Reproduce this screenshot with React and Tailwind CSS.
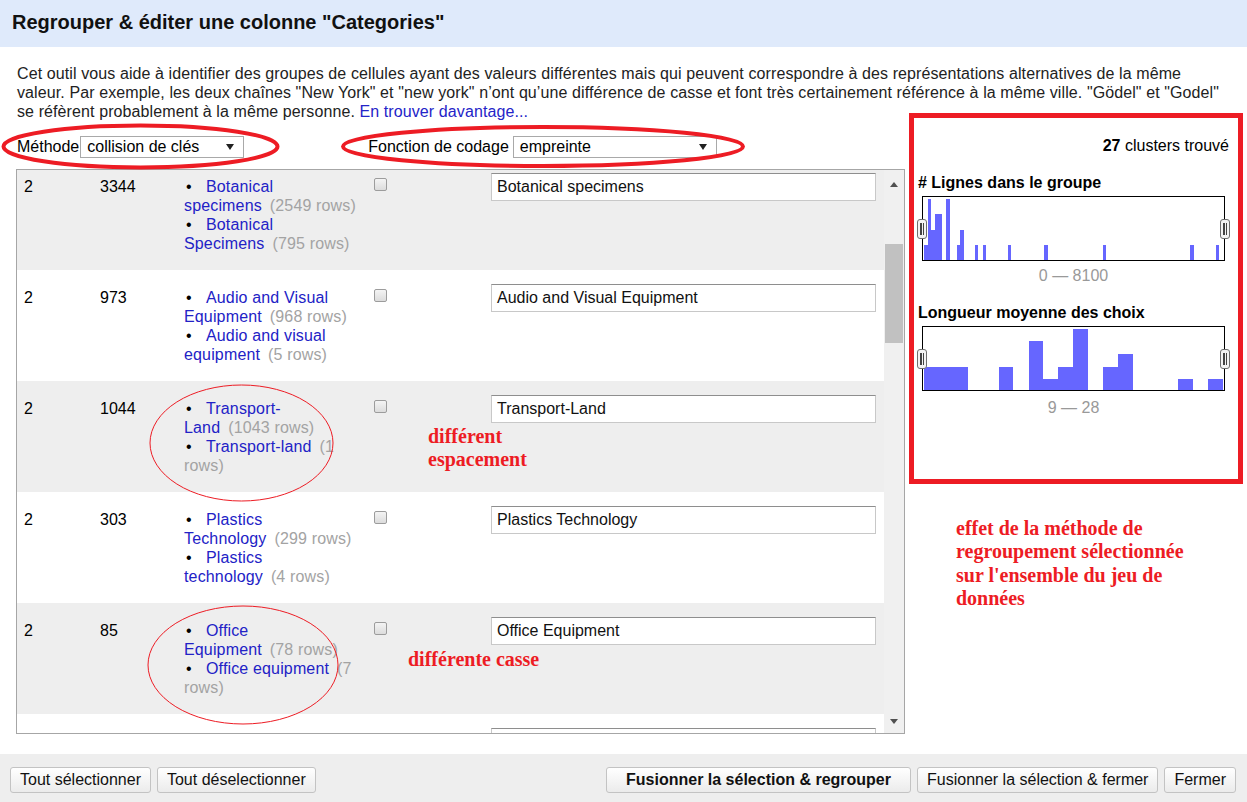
import React from 'react';

const rows = [
  { a: '2', b: '3344', items: [['Botanical|', 'specimens|(2549 rows)'], ['Botanical|', 'Specimens|(795 rows)']], v: 'Botanical specimens' },
  { a: '2', b: '973', items: [['Audio and Visual|', 'Equipment|(968 rows)'], ['Audio and visual|', 'equipment|(5 rows)']], v: 'Audio and Visual Equipment' },
  { a: '2', b: '1044', items: [['Transport-|', 'Land|(1043 rows)'], ['Transport-land|(1', '|rows)']], v: 'Transport-Land' },
  { a: '2', b: '303', items: [['Plastics|', 'Technology|(299 rows)'], ['Plastics|', 'technology|(4 rows)']], v: 'Plastics Technology' },
  { a: '2', b: '85', items: [['Office|', 'Equipment|(78 rows)'], ['Office equipment|(7', '|rows)']], v: 'Office Equipment' },
  { a: '', b: '', items: [], v: '' },
];

const bars1 = [[924, 928, 15], [928, 931, 61], [931, 935, 30], [935, 942, 46], [946, 950, 61], [957, 960, 15], [960, 964, 30], [975, 978, 15], [983, 986, 15], [1008, 1011, 15], [1044, 1048, 15], [1103, 1106, 15], [1190, 1194, 15], [1216, 1219, 15]];
const bars2 = [[924, 968, 23], [999, 1013, 23], [1029, 1043, 49], [1043, 1058, 11], [1058, 1073, 23], [1073, 1088, 61], [1103, 1118, 23], [1118, 1133, 36], [1178, 1193, 11], [1208, 1223, 11]];

function Select({ value, width }) {
  return (
    <div className={`${width} h-[22px] border border-[#a9a9a9] bg-white flex items-center justify-between pl-[6px] pr-[9px] leading-[20px]`}>
      <span>{value}</span>
      <span className="w-0 h-0 border-x-[4px] border-x-transparent border-t-[6px] border-t-[#222]" />
    </div>
  );
}

function Handle({ side }) {
  return (
    <div className={`absolute top-[23px] ${side} w-[10px] h-[20px] rounded-[3px] border-[1.5px] border-[#6f6f6f] bg-[#f4f4f4] flex items-center justify-center gap-[1px]`}>
      <span className="w-[1.5px] h-[12px] bg-[#444]" />
      <span className="w-[1.5px] h-[12px] bg-[#444]" />
    </div>
  );
}

function Chart({ bars }) {
  return (
    <div className="relative ml-[4px] w-[303px] h-[65px]">
      <div className="w-full h-full border border-black">
        <svg width="301" height="63" viewBox="0 0 301 63">
          {bars.map(([x1, x2, h], i) => (
            <rect key={i} x={x1 - 923} y={63 - h} width={x2 - x1} height={h} fill="#6666ff" />
          ))}
        </svg>
      </div>
      <Handle side="left-[-5px]" />
      <Handle side="right-[-5px]" />
    </div>
  );
}

function Row({ r, i }) {
  return (
    <div className={`flex items-start h-[111px] shrink-0 ${i % 2 === 0 ? 'bg-[#eeeeee]' : 'bg-white'} ${i === 0 ? 'mt-[-11px]' : ''}`}>
      <div className="w-[83px] pl-[7px] pt-[18px] leading-[19px]">{r.a}</div>
      <div className="w-[84px] pt-[18px] leading-[19px]">{r.b}</div>
      <div className="w-[190px] pt-[18px] leading-[19px] tracking-[0.15px]">
        {r.items.map((lines, k) => (
          <div key={k}>
            {lines.map((line, j) => {
              const [link, gray] = line.split('|');
              return (
                <div key={j} className="whitespace-nowrap">
                  {j === 0 && <span className="inline-block w-[22px] pl-[2px]">•</span>}
                  {link && <span className="text-[#2222c6]">{link}</span>}
                  {gray && <span className={`text-[#a3a3a3] ${link ? 'ml-[8px]' : ''}`}>{gray}</span>}
                </div>
              );
            })}
          </div>
        ))}
      </div>
      <div className="w-[117px] pt-[19px]">
        <div className="w-[13px] h-[13px] rounded-[2px] border border-[#9c9c9c] bg-linear-to-b from-[#f4f4f4] to-[#dcdcdc]" />
      </div>
      <div className="w-[385px] pt-[14px]">
        <div className="h-[28px] border border-[#c8c8c8] border-t-[#8e8e8e] bg-white pl-[5px] leading-[26px] text-[#111]">{r.v}</div>
      </div>
    </div>
  );
}

function Btn({ children, bold }) {
  return (
    <button className={`h-[26px] rounded-[3px] border border-[#c3c3c3] bg-linear-to-b from-white to-[#ebebeb] leading-[24px] text-[#111] ${bold ? 'font-bold px-[19px]' : 'px-[9px]'}`}>
      {children}
    </button>
  );
}

export default function App() {
  return (
    <div className="relative w-[1247px] h-[802px] bg-white text-[16px] text-black font-['Liberation_Sans',Arial,sans-serif] flex flex-col overflow-hidden">
      {/* Header */}
      <div className="h-[47px] shrink-0 bg-[#dfeafb] pl-[12px] pt-[11px] text-[20px] leading-[23px] font-bold text-[#111]">
        Regrouper &amp; éditer une colonne "Categories"
      </div>

      {/* Description */}
      <div className="h-[77px] shrink-0 pl-[17px] pt-[17px] leading-[19px] text-[#222] whitespace-nowrap tracking-[0.1px]">
        Cet outil vous aide à identifier des groupes de cellules ayant des valeurs différentes mais qui peuvent correspondre à des représentations alternatives de la même<br />
        valeur. Par exemple, les deux chaînes "New York" et "new york" n’ont qu’une différence de casse et font très certainement référence à la même ville. "Gödel" et "Godel"<br />
        se réfèrent probablement à la même personne. <span className="text-[#2424c8]">En trouver davantage...</span>
      </div>

      {/* Main */}
      <div className="flex h-[610px] shrink-0">
        <div className="w-[889px] ml-[16px] flex flex-col">
          <div className="h-[45px] flex items-center pl-[1px]">
            <span className="mr-[1px]">Méthode</span>
            <Select value="collision de clés" width="w-[164px]" />
            <span className="ml-[124px] mr-[4px]">Fonction de codage</span>
            <Select value="empreinte" width="w-[204px]" />
          </div>
          <div className="h-[565px] border border-[#a6a6a6] flex">
            <div className="flex-1 overflow-hidden flex flex-col">
              {rows.map((r, i) => <Row key={i} r={r} i={i} />)}
            </div>
            <div className="w-[20px] bg-[#f0f0f0] flex flex-col">
              <div className="h-[28px] flex items-center justify-center">
                <span className="w-0 h-0 border-x-[4px] border-x-transparent border-b-[5px] border-b-[#505050]" />
              </div>
              <div className="h-[46px]" />
              <div className="h-[99px] mx-[1px] bg-[#c1c1c1]" />
              <div className="flex-1" />
              <div className="h-[24px] flex items-center justify-center">
                <span className="w-0 h-0 border-x-[4px] border-x-transparent border-t-[5px] border-t-[#505050]" />
              </div>
            </div>
          </div>
        </div>

        <div className="flex-1 pl-[13px] pr-[18px] pt-[12px] leading-[19px]">
          <div className="text-right"><b>27</b> clusters trouvé</div>
          <div className="mt-[18px] font-bold">#&nbsp;Lignes dans le groupe</div>
          <div className="mt-[4px]"><Chart bars={bars1} /></div>
          <div className="mt-[5px] ml-[4px] w-[303px] text-center text-[#999]">0 — 8100</div>
          <div className="mt-[18px] font-bold">Longueur moyenne des choix</div>
          <div className="mt-[4px]"><Chart bars={bars2} /></div>
          <div className="mt-[7px] ml-[4px] w-[303px] text-center text-[#999]">9 — 28</div>
        </div>
      </div>

      {/* Footer */}
      <div className="mt-[20px] h-[48px] shrink-0 bg-[#eeeeee] flex items-center justify-between pl-[10px] pr-[11px] pt-[3px]">
        <div className="flex gap-[6px]">
          <Btn>Tout sélectionner</Btn>
          <Btn>Tout déselectionner</Btn>
        </div>
        <div className="flex gap-[6px]">
          <Btn bold>Fusionner la sélection &amp; regrouper</Btn>
          <Btn>Fusionner la sélection &amp; fermer</Btn>
          <Btn>Fermer</Btn>
        </div>
      </div>

      {/* Annotations */}
      <svg className="absolute left-0 top-0 pointer-events-none" width="1247" height="802">
        <ellipse cx="140.5" cy="146.5" rx="137" ry="21" fill="none" stroke="#ed1c24" strokeWidth="4" />
        <ellipse cx="543" cy="146.5" rx="200" ry="19.5" fill="none" stroke="#ed1c24" strokeWidth="4" />
        <ellipse cx="241.5" cy="443" rx="91.5" ry="58" fill="none" stroke="#ed1c24" strokeWidth="1" />
        <ellipse cx="243" cy="665" rx="95" ry="59" fill="none" stroke="#ed1c24" strokeWidth="1" />
      </svg>
      <div className="absolute left-[909px] top-[113px] w-[334px] h-[371px] border-[5px] border-[#ed1c24] pointer-events-none" />
      <div className="absolute left-[428px] top-[425px] font-['Liberation_Serif',serif] font-bold text-[20px] leading-[23px] text-[#ed1c24]">
        différent<br />espacement
      </div>
      <div className="absolute left-[408px] top-[648px] font-['Liberation_Serif',serif] font-bold text-[20px] leading-[23px] text-[#ed1c24]">
        différente casse
      </div>
      <div className="absolute left-[956px] top-[517px] font-['Liberation_Serif',serif] font-bold text-[20px] leading-[23.3px] text-[#ed1c24]">
        effet de la méthode de<br />regroupement sélectionnée<br />sur l'ensemble du jeu de<br />données
      </div>
    </div>
  );
}
